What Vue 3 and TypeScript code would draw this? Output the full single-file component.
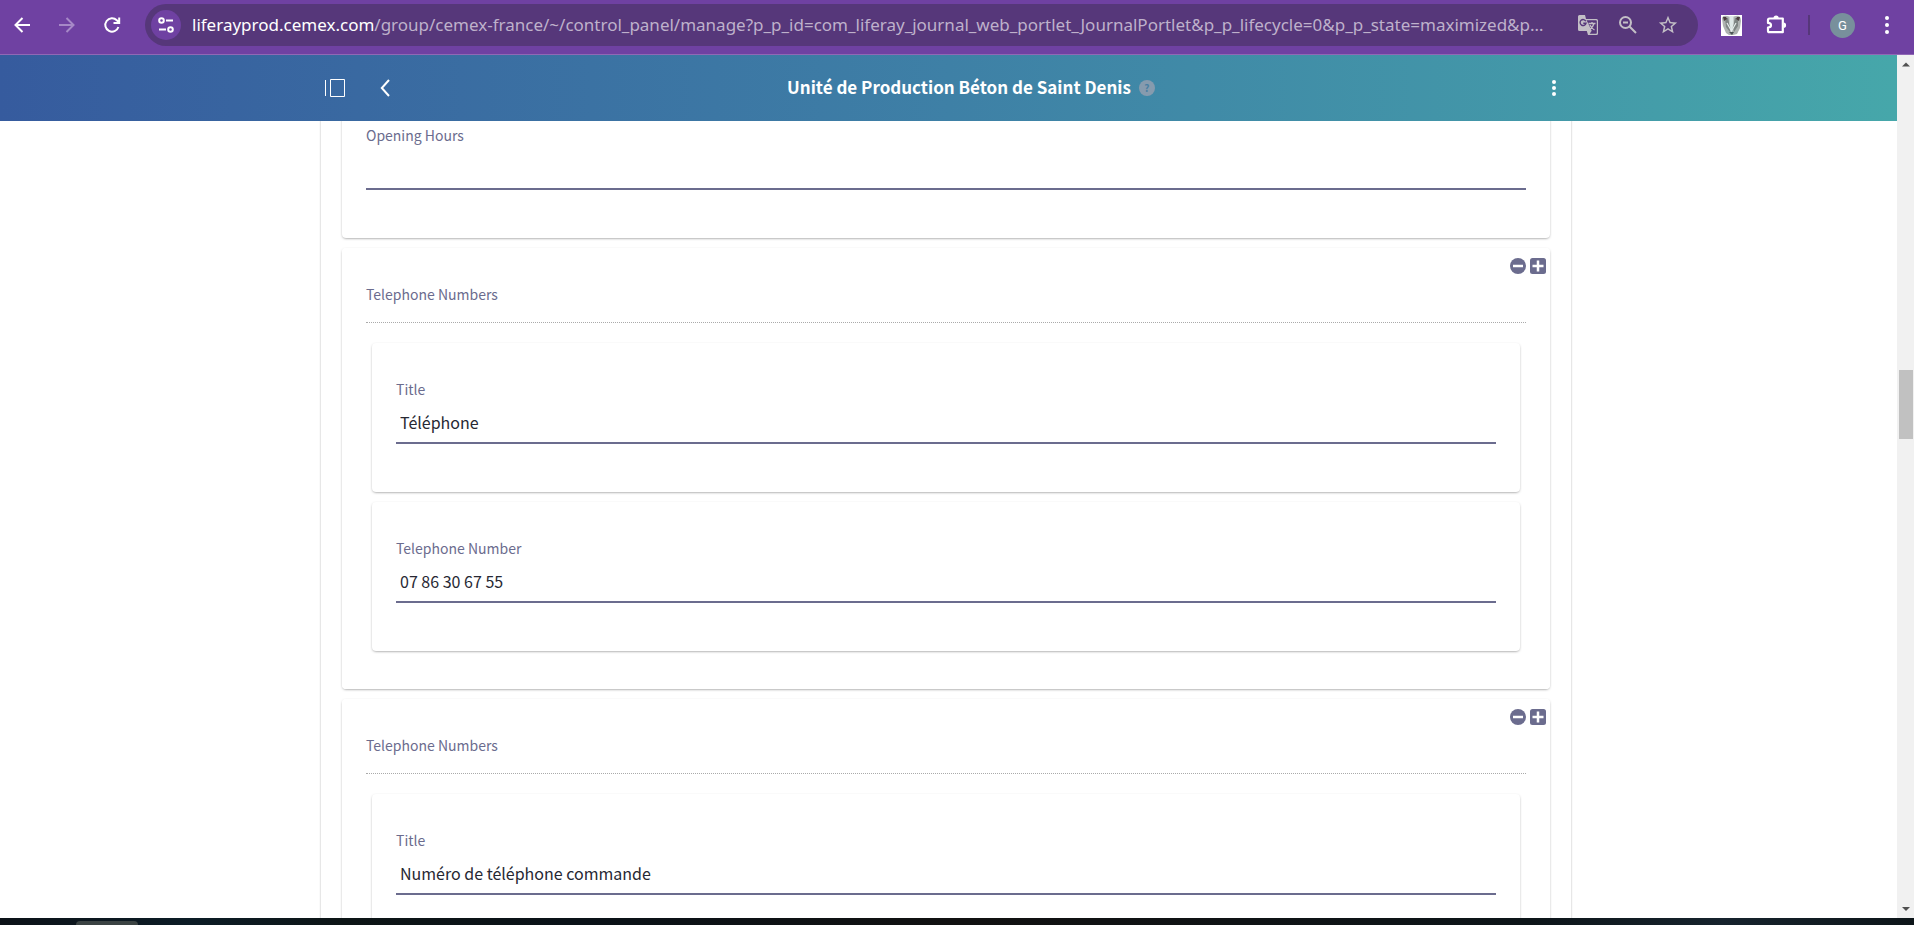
<script setup lang="ts">
import { ref } from 'vue'

interface Field {
  id: string
  label: string
  value: string
}

interface Group {
  id: string
  fields: Field[]
}

const title = 'Unité de Production Béton de Saint Denis'
const host = 'liferayprod.cemex.com'
const path =
  '/group/cemex-france/~/control_panel/manage?p_p_id=com_liferay_journal_web_portlet_JournalPortlet&p_p_lifecycle=0&p_p_state=maximized&p…'

const openingHours = ref('')
const groups = ref<Group[]>([
  {
    id: 'phone-1',
    fields: [
      { id: 'phone-1-title', label: 'Title', value: 'Téléphone' },
      { id: 'phone-1-number', label: 'Telephone Number', value: '07 86 30 67 55' },
    ],
  },
  {
    id: 'phone-2',
    fields: [{ id: 'phone-2-title', label: 'Title', value: 'Numéro de téléphone commande' }],
  },
])
</script>

<template>
  <div class="screen">
    <nav class="toolbar" aria-label="Browser">
      <button class="tool" aria-label="Back">
        <svg width="20" height="20" viewBox="0 0 20 20" fill="none" stroke="#fff" stroke-width="2"><path d="M18 10H4M10.500 3L3.500 10l7 7" /></svg>
      </button>
      <button class="tool" aria-label="Forward">
        <svg width="20" height="20" viewBox="0 0 20 20" fill="none" stroke="#a688c7" stroke-width="2"><path d="M2 10h14M9.500 3l7 7l-7 7" /></svg>
      </button>
      <button class="tool" aria-label="Reload">
        <svg width="20" height="20" viewBox="0 0 20 20" fill="none" stroke="#fff" stroke-width="2"><path d="M16.400 12A6.700 6.700 0 1 1 14.800 5.300L17 7.500M17.200 2.500V8H11.500" /></svg>
      </button>
      <div class="omnibox">
        <button class="site" aria-label="Site information">
          <svg width="18" height="18" viewBox="0 0 18 18" fill="none" stroke="#fff" stroke-width="2"><circle cx="4.500" cy="4.500" r="2.300" /><path d="M9 4.500h7M2 13.500h7" /><circle cx="13.500" cy="13.500" r="2.300" /></svg>
        </button>
        <span class="url"><span class="host">{{ host }}</span>{{ path }}</span>
        <button class="tool" aria-label="Translate">
          <svg width="22" height="22" viewBox="0 0 22 22"><path d="M2.500 1H8l1 4h10.500Q21 5 21 6.500v13q0 1.500-1.500 1.500H11l-1.200-4H2.500Q1 17 1 15.500v-13Q1 1 2.500 1z" fill="#c3bfc6" /><path d="M9.600 6.200h9.400q.8 0 .8.800v12q0 .8-.8.800h-6.300l2-3z" fill="#56377a" /><path d="M8.800 7.200A3 3 0 1 0 9 9.300H6.300" fill="none" stroke="#56377a" stroke-width="1.400" /><path d="M11.500 9.500h7M15 8v1.500M17 9.500q-1 4-4.500 6M13 11q1.500 3.500 4.500 5" fill="none" stroke="#c3bfc6" stroke-width="1.300" /></svg>
        </button>
        <button class="tool" aria-label="Zoom">
          <svg width="20" height="20" viewBox="0 0 20 20" fill="none" stroke="#c3bfc6" stroke-width="2"><circle cx="7.500" cy="7.500" r="5.500" /><path d="M11.500 11.500l6.500 6.500M5 7.500h5" /></svg>
        </button>
        <button class="tool" aria-label="Bookmark this tab">
          <svg width="22" height="22" viewBox="0 0 24 24" fill="#c3bfc6"><path d="M22 9.240l-7.190-.62L12 2 9.190 8.630 2 9.240l5.460 4.730L5.820 21 12 17.270 18.180 21l-1.630-7.030L22 9.240zM12 15.400l-3.760 2.270 1-4.280-3.320-2.880 4.380-.38L12 6.100l1.710 4.040 4.380.38-3.320 2.880 1 4.280L12 15.400z" /></svg>
        </button>
      </div>
      <div class="extras">
        <button class="tool" aria-label="Badger extension">
          <svg width="21" height="21" viewBox="0 0 21 21"><rect width="21" height="21" fill="#fff" /><path d="M1 3Q2 0 6 1l4 1 5-1q5-1 5 5l-1 7-3 6-4 1H8l-3-2-3-7z" fill="#aeb3b1" /><path d="M4 3l3 0 2 9 0 5-4-5zM17 3l-3 0-2 9 1 5 4-6z" fill="#7e8583" /><path d="M8.500 1h4l0 8-2 8-2-8z" fill="#dfe9e8" /><path d="M2 2l3 0 1 2-3 2zM19 2l-3 0-1 2 3 2z" fill="#4b3d3f" /><path d="M6 8l4.500 8L15 8" fill="none" stroke="#e6eeed" stroke-width="1.200" /><path d="M8 17h5l-2 3z" fill="#4c5556" /></svg>
        </button>
        <button class="tool" aria-label="Extensions">
          <svg width="22" height="22" viewBox="0 0 22 22"><path d="M3.500 4.500h13.300v13.700H3.500q-1.500 0-1.500-1.500v-3.200q3-.2 3-2.300t-3-2.300V6q0-1.500 1.500-1.500z" fill="none" stroke="#fff" stroke-width="2.200" stroke-linejoin="round" /><path d="M7.500 4a2.600 2.600 0 0 1 5.200 0zM17.500 8.600a2.600 2.600 0 0 1 0 5.200z" fill="#fff" /></svg>
        </button>
        <span class="divider"></span>
        <button class="avatar" aria-label="Profile">G</button>
        <button class="tool" aria-label="Browser menu">
          <svg width="20" height="20" viewBox="0 0 20 20" fill="#fff"><circle cx="10" cy="3" r="2" /><circle cx="10" cy="10" r="2" /><circle cx="10" cy="17" r="2" /></svg>
        </button>
      </div>
    </nav>

    <div class="viewport">
      <div class="page">
        <header class="header">
          <div class="bar">
            <button class="icon" aria-label="Toggle menu">
              <svg width="20" height="18" viewBox="0 0 20 18" fill="none" stroke="#fff"><path d="M.5 1v16M5.500 .5h14v17h-14z" /></svg>
            </button>
            <button class="icon" aria-label="Go back">
              <svg width="10" height="18" viewBox="0 0 10 18" fill="none" stroke="#fff" stroke-width="2"><path d="M9 1L1.800 9L9 17" /></svg>
            </button>
            <div class="heading">
              <h1>{{ title }}</h1>
              <button class="help" aria-label="Help">?</button>
            </div>
            <button class="icon" aria-label="Options">
              <svg width="4" height="18" viewBox="0 0 4 18" fill="#fff"><circle cx="2" cy="3" r="2" /><circle cx="2" cy="9" r="2" /><circle cx="2" cy="15" r="2" /></svg>
            </button>
          </div>
        </header>
        <main class="content">
          <form class="sheet" @submit.prevent>
            <div class="card scrolled">
              <label for="opening-hours">Opening Hours</label>
              <input id="opening-hours" v-model="openingHours" type="text" />
            </div>
            <fieldset v-for="group in groups" :key="group.id" class="group">
              <div class="actions">
                <button type="button" aria-label="Remove">
                  <svg width="16" height="16" viewBox="0 0 16 16"><circle cx="8" cy="8" r="8" fill="#6b6c8e" /><path d="M3 8h10" stroke="#fff" stroke-width="2.500" /></svg>
                </button>
                <button type="button" aria-label="Add">
                  <svg width="16" height="16" viewBox="0 0 16 16"><rect width="16" height="16" rx="2.500" fill="#6b6c8e" /><path d="M2.500 8h11M8 2.500v11" stroke="#fff" stroke-width="2.500" /></svg>
                </button>
              </div>
              <p class="name">Telephone Numbers</p>
              <div class="nested">
                <div v-for="field in group.fields" :key="field.id" class="card">
                  <label :for="field.id">{{ field.label }}</label>
                  <input :id="field.id" v-model="field.value" type="text" />
                </div>
              </div>
            </fieldset>
          </form>
        </main>
      </div>
      <div class="scrollbar" aria-hidden="true">
        <svg width="17" height="17" viewBox="0 0 17 17"><path d="M5 11.500L9 7.500L13 11.500z" fill="#505050" /></svg>
        <div class="track"><div class="thumb"></div></div>
        <svg width="17" height="17" viewBox="0 0 17 17"><path d="M5 6L9 10L13 6z" fill="#505050" /></svg>
      </div>
    </div>
    <footer class="taskbar"><span class="task"></span></footer>
  </div>
</template>

<style>
html,
body {
  overflow: hidden;
}
</style>

<style scoped>
.screen {
  display: flex;
  flex-direction: column;
  height: 100vh;
  overflow: hidden;
  font-family: 'Noto Sans CJK SC', 'Noto Sans', sans-serif;
  color: #272833;
  background: #fff;
}

.screen *,
.screen *::before {
  box-sizing: border-box;
}

button {
  display: flex;
  align-items: center;
  justify-content: center;
  flex: none;
  padding: 0;
  border: 0;
  background: none;
  font-family: inherit;
}

svg {
  display: block;
}

.toolbar {
  display: flex;
  align-items: center;
  flex: none;
  height: 55px;
  padding: 0 17px 4px 12px;
  border-bottom: 1px solid #9068b5;
  background: #6f41a2;
}

.toolbar > .tool {
  width: 20px;
  margin-right: 25px;
}

.omnibox {
  display: flex;
  align-items: center;
  flex: 1;
  min-width: 0;
  height: 42px;
  padding: 0 19px 0 6px;
  border-radius: 21px;
  background: #56377a;
}

.toolbar > .omnibox {
  margin-left: -2px;
}

.site {
  width: 30px;
  height: 30px;
  border-radius: 50%;
  background: #6f41a2;
}

.url {
  flex: 1;
  min-width: 0;
  margin-left: 11px;
  overflow: hidden;
  font-family: 'Noto Sans', sans-serif;
  font-size: 17px;
  line-height: 24px;
  white-space: nowrap;
  color: #beb1cb;
}

.host {
  color: #fff;
}

.omnibox .tool {
  width: 22px;
  margin-left: 18px;
}

.extras {
  display: flex;
  align-items: center;
  flex: none;
  margin-left: 23px;
}

.divider {
  width: 2px;
  height: 20px;
  margin: 0 20px;
  background: #56377a;
}

.extras .tool + .tool {
  margin-left: 24px;
}

.avatar {
  width: 25px;
  height: 25px;
  margin-right: 22px;
  border-radius: 50%;
  background: #78909c;
  font-family: Roboto, sans-serif;
  font-size: 13px;
  color: #fff;
}

.viewport {
  display: flex;
  flex: 1;
  min-height: 0;
}

.page {
  display: flex;
  flex-direction: column;
  flex: 1;
  min-width: 0;
}

.header {
  flex: none;
  padding-right: 5px;
  background: linear-gradient(90deg, #365b9e, #3e80a6 50%, #46a7aa);
}

.bar {
  display: flex;
  align-items: center;
  max-width: 1250px;
  height: 66px;
  margin: 0 auto;
  padding: 0 15px 0 4px;
}

.bar > .icon + .icon {
  margin-left: 35px;
}

.heading {
  display: flex;
  align-items: center;
  justify-content: center;
  flex: 1;
}

h1 {
  margin: 0;
  padding-bottom: 2px;
  font-size: 17px;
  line-height: 24px;
  font-weight: 700;
  color: #fff;
}

.help {
  width: 16px;
  height: 16px;
  margin-left: 8px;
  border-radius: 50%;
  background: #869bae;
  font-size: 10px;
  font-weight: 700;
  line-height: 16px;
  color: #4a7fa2;
}

.content {
  flex: 1;
  min-height: 0;
  overflow: hidden;
  padding-right: 5px;
}

.sheet {
  max-width: 1250px;
  margin: 0 auto;
  padding: 0 21px;
  box-shadow: 0 0 2px rgba(0, 0, 0, 0.3);
}

.card,
.group {
  border-radius: 4px;
  background: #fff;
  box-shadow: 0 1px 3px -1px rgba(0, 0, 0, 0.6);
}

.card {
  padding: 35px 24px 48px;
}

.card + .card {
  margin-top: 10px;
}

.scrolled {
  margin-top: -32px;
}

.group {
  min-width: 0;
  margin: 10px 0 0;
  padding: 10px 0 38px;
  border: 0;
}

.actions {
  display: flex;
  justify-content: flex-end;
  gap: 4px;
  padding-right: 4px;
}

.name {
  margin: 9px 24px 0;
  padding-bottom: 17px;
  border-bottom: 1px dotted #aaa;
}

.name,
label {
  font-size: 14px;
  line-height: 22px;
  color: #6b6c8e;
}

label {
  display: block;
}

.nested {
  margin: 20px 30px 0;
}

input {
  display: block;
  width: 100%;
  height: 44px;
  padding: 2px 4px 1px;
  border: 0;
  border-bottom: 2px solid #6b6c8e;
  border-radius: 0;
  background: none;
  font-family: inherit;
  font-size: 16px;
  line-height: 24px;
  color: #272833;
  outline: none;
}

.scrollbar {
  display: flex;
  flex-direction: column;
  flex: none;
  width: 17px;
  background: #f1f1f1;
}

.track {
  flex: 1;
  padding: 0 1px 0 2px;
}

.track::before {
  content: '';
  display: block;
  height: 36%;
}

.thumb {
  height: 69px;
  background: #c1c1c1;
}

.taskbar {
  display: flex;
  flex: none;
  height: 7px;
  padding-left: 76px;
  overflow: hidden;
  background: linear-gradient(90deg, #0c1218, #0c1c26 10%, #0d1516 18%, #0a1218 30%, #111 50%, #0d1519 80%, #16232d 90%, #0d1519);
}

.task {
  width: 62px;
  height: 4px;
  margin-top: 3px;
  border-radius: 8px 8px 0 0;
  background: #3b4343;
}
</style>
